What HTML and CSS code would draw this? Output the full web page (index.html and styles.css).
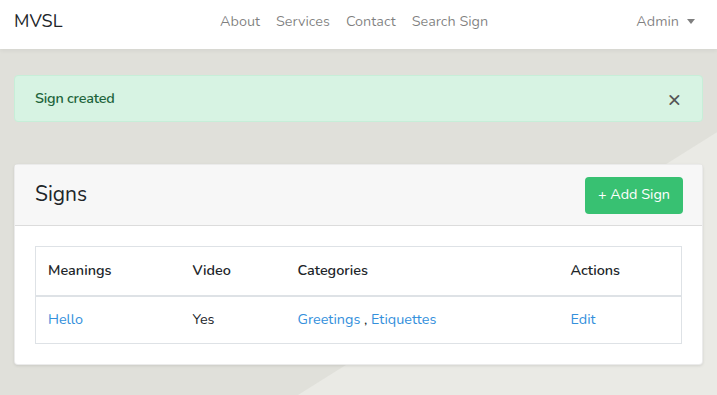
FILE: index.html
```html
<!DOCTYPE html>
<html>
<head>
<meta charset="utf-8">
<link rel="stylesheet" href="styles.css">
</head>
<body>
<nav class="navbar">
  <a class="brand">MVSL</a>
  <ul class="nav-center">
    <li>About</li>
    <li>Services</li>
    <li>Contact</li>
    <li>Search Sign</li>
  </ul>
  <div class="nav-user">Admin <span class="caret"></span></div>
</nav>
<main class="main">
  <div class="alert">
    <span class="alert-text">Sign created</span>
    <span class="close">&times;</span>
  </div>
  <div class="card">
    <div class="card-header">
      <span class="card-title">Signs</span>
      <a class="btn">+ Add Sign</a>
    </div>
    <div class="card-body">
      <table class="table">
        <thead>
          <tr><th class="c1">Meanings</th><th class="c2">Video</th><th class="c3">Categories</th><th class="c4">Actions</th></tr>
        </thead>
        <tbody>
          <tr><td><a>Hello</a></td><td>Yes</td><td><a>Greetings</a> , <a>Etiquettes</a></td><td><a>Edit</a></td></tr>
        </tbody>
      </table>
    </div>
  </div>
</main>
</body>
</html>
```
FILE: styles.css
```css
* { box-sizing: border-box; }
html, body { margin: 0; padding: 0; }
body {
  min-height: 100vh;
  font-family: "Nunito", "Lato", "Open Sans", sans-serif;
  font-size: 14.4px;
  line-height: 1.6;
  color: #212529;
  background: linear-gradient(147.9deg, #e0e0da 0, #e0e0da 492.5px, #eaeae5 493.5px, #eaeae5 100%);
}
a { color: #3490dc; text-decoration: none; }
.navbar {
  height: 49px;
  background: #fff;
  display: flex;
  align-items: center;
  padding: 0 14px 6px;
  box-shadow: 0 2px 4px rgba(0,0,0,.05);
  position: relative;
}
.brand { font-size: 18px; color: #212529; width: 206px; }
.nav-center { list-style: none; margin: 0; padding: 0; display: flex; gap: 16px; flex: 1; }
.nav-center li, .nav-user { color: rgba(0,0,0,.5); }
.nav-user { margin-right: 8px; display: flex; align-items: center; gap: 6px; }
.caret { width: 0; height: 0; border-left: 4.5px solid transparent; border-right: 4.5px solid transparent; border-top: 5px solid rgba(0,0,0,.5); margin-left: 2px; }
.main { padding: 26px 14px 0; }
.alert {
  height: 47px;
  background: #d7f3e3;
  border: 1px solid #c7eed8;
  border-radius: 4px;
  color: #1d643b;
  display: flex;
  align-items: center;
  justify-content: space-between;
  padding: 0 20px;
}
.alert-text { font-weight: 600; letter-spacing: -0.2px; }
.close { font-size: 22px; color: #555; line-height: 1; font-weight: 600; margin-right: 1px; }
.card {
  margin-top: 42px;
  background: #fff;
  border: 1px solid rgba(0,0,0,.08);
  border-radius: 4px;
  box-shadow: 0 1px 3px rgba(0,0,0,.1);
}
.card-header {
  height: 61px;
  background: #f7f7f7;
  border-bottom: 1px solid #dcdcdc;
  display: flex;
  align-items: center;
  justify-content: space-between;
  padding: 0 19px 0 20px;
}
.card-title { font-size: 21px; color: #212529; }
.btn {
  background: #38c172;
  color: #fff;
  border-radius: 4px;
  height: 37px;
  padding: 0 13px;
  display: flex;
  align-items: center;
  font-size: 14.4px;
}
.card-body { padding: 20px; }
.table { width: 100%; border-collapse: collapse; border: 1px solid #dee2e6; }
.table th { text-align: left; font-weight: 600; height: 49px; padding: 0 12px; border-bottom: 2px solid #dee2e6; }
.table td { height: 48px; padding: 0 12px; }
.c1 { width: 145px; }
.c2 { width: 105px; }
.c3 { width: 273px; }
```
